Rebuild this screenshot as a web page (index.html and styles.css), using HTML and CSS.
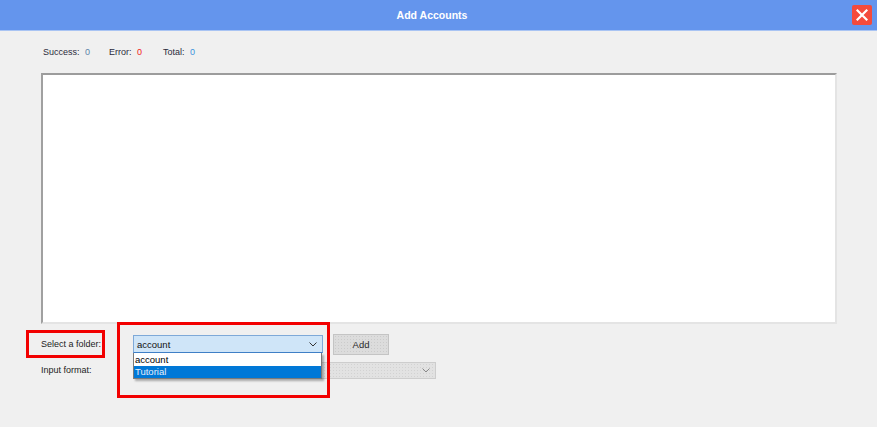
FILE: index.html
```html
<!DOCTYPE html>
<html lang="en">
<head>
    <meta charset="UTF-8">
    <title>Add Accounts</title>
    <link rel="stylesheet" href="styles.css">
</head>
<body>
    <div class="titlebar">
        <div class="title">Add Accounts</div>
        <button class="close" title="Close">
            <svg width="12" height="12" viewBox="0 0 12 12">
                <path d="M1.5 1.5 L10.5 10.5 M10.5 1.5 L1.5 10.5" stroke="#fff" stroke-width="2.2" stroke-linecap="square"/>
            </svg>
        </button>
    </div>

    <div class="stats">
        <span class="stat">Success: <b class="num ok">0</b></span>
        <span class="stat">Error: <b class="num err">0</b></span>
        <span class="stat">Total: <b class="num total">0</b></span>
    </div>

    <div class="log"></div>

    <div class="form">
        <div class="row">
            <label class="label">Select a folder:</label>
            <div class="combo active">
                <span>account</span>
                <svg class="arrow" width="8" height="5" viewBox="0 0 8 5"><path d="M0.5 0.5 L4 4 L7.5 0.5" fill="none" stroke="#333" stroke-width="1"/></svg>
            </div>
            <button class="btn" disabled>Add</button>
        </div>
        <div class="row">
            <label class="label">Input format:</label>
            <div class="combo disabled wide">
                <span></span>
                <svg class="arrow" width="8" height="5" viewBox="0 0 8 5"><path d="M0.5 0.5 L4 4 L7.5 0.5" fill="none" stroke="#8a8a8a" stroke-width="1"/></svg>
            </div>
        </div>

        <ul class="droplist">
            <li>account</li>
            <li class="selected">Tutorial</li>
        </ul>

        <div class="mark mark-label"></div>
        <div class="mark mark-combo"></div>
    </div>
</body>
</html>
```

FILE: styles.css
```css
body {
    margin: 0;
    width: 877px;
    height: 427px;
    background: #f0f0f0;
    font-family: "Liberation Sans", Arial, sans-serif;
    color: #222;
    overflow: hidden;
}
.titlebar {
    height: 31px;
    background: #6495ed;
    border-bottom: 1px solid #a9c4f3;
    box-sizing: border-box;
    display: flex;
    align-items: center;
    padding-right: 5px;
}
.title {
    flex: 1;
    text-align: center;
    padding-left: 12px;
    color: #fff;
    font-weight: bold;
    font-size: 10.5px;
}
.close {
    width: 20px;
    height: 20px;
    margin-top: -1px;
    padding: 0;
    border: none;
    border-radius: 2px;
    background: #f44a3c;
    display: flex;
    align-items: center;
    justify-content: center;
}
.stats {
    display: flex;
    padding: 16px 0 0 43px;
    height: 26px;
    font-size: 9px;
    color: #2b2b3b;
}
.stat {
    margin-right: 19px;
}
.stat:nth-child(2) {
    margin-right: 21px;
}
.num {
    font-weight: normal;
    margin-left: 3px;
}
.ok { color: #5c84a8; }
.err { color: #f0221a; }
.total { color: #3d92dc; }
.log {
    margin-left: 41px;
    width: 796px;
    height: 251px;
    box-sizing: border-box;
    background: #fff;
    border: 2px solid #e4e4e4;
    border-top-color: #9c9c9c;
    border-left-color: #a0a0a0;
}
.form {
    position: relative;
    padding: 11px 0 0 41px;
    font-size: 9px;
    color: #1c1c1c;
}
.row {
    display: flex;
    align-items: center;
    height: 18px;
    margin-bottom: 8px;
}
.label {
    width: 92px;
}
.combo {
    box-sizing: border-box;
    height: 18px;
    width: 190px;
    display: flex;
    align-items: center;
    justify-content: space-between;
    padding: 0 5px 0 3px;
    font-size: 9.5px;
}
.combo.active {
    background: #cfe5f8;
    border: 1px solid #7ea9d8;
    border-bottom-color: #3f7fc6;
    color: #111;
}
.combo.disabled {
    background: #e2e2e2 radial-gradient(circle, #d2d2d2 0.6px, transparent 0.8px) 0 0 / 3px 3px;
    border: 1px solid #cdcdcd;
    height: 17px;
}
.combo.wide {
    width: 303px;
}
.btn {
    margin-left: 10px;
    width: 56px;
    height: 21px;
    padding: 0;
    font-family: inherit;
    font-size: 9.5px;
    color: #2a2a2a;
    background: #dcdcdc radial-gradient(circle, #cbcbcb 0.6px, transparent 0.8px) 0 0 / 3px 3px;
    border: 1px solid #c4c4c4;
}
.droplist {
    position: absolute;
    left: 133px;
    top: 29px;
    width: 189px;
    margin: 0;
    padding: 0;
    list-style: none;
    background: #fff;
    border: 1px solid #7a7a7a;
    border-top: none;
    box-sizing: border-box;
    box-shadow: 2px 2px 2px rgba(0, 0, 0, 0.3);
    font-size: 9.5px;
}
.droplist li {
    height: 12px;
    line-height: 12px;
    padding-left: 1px;
    color: #000;
}
.droplist li:first-child {
    margin-top: 1px;
}
.droplist li.selected {
    background: #0078d7;
    color: #e6eefa;
}
.mark {
    position: absolute;
    border: 3px solid #f20000;
    box-sizing: border-box;
}
.mark-label {
    left: 26px;
    top: 6px;
    width: 79px;
    height: 28px;
}
.mark-combo {
    left: 117px;
    top: -2px;
    width: 213px;
    height: 76px;
}
```
